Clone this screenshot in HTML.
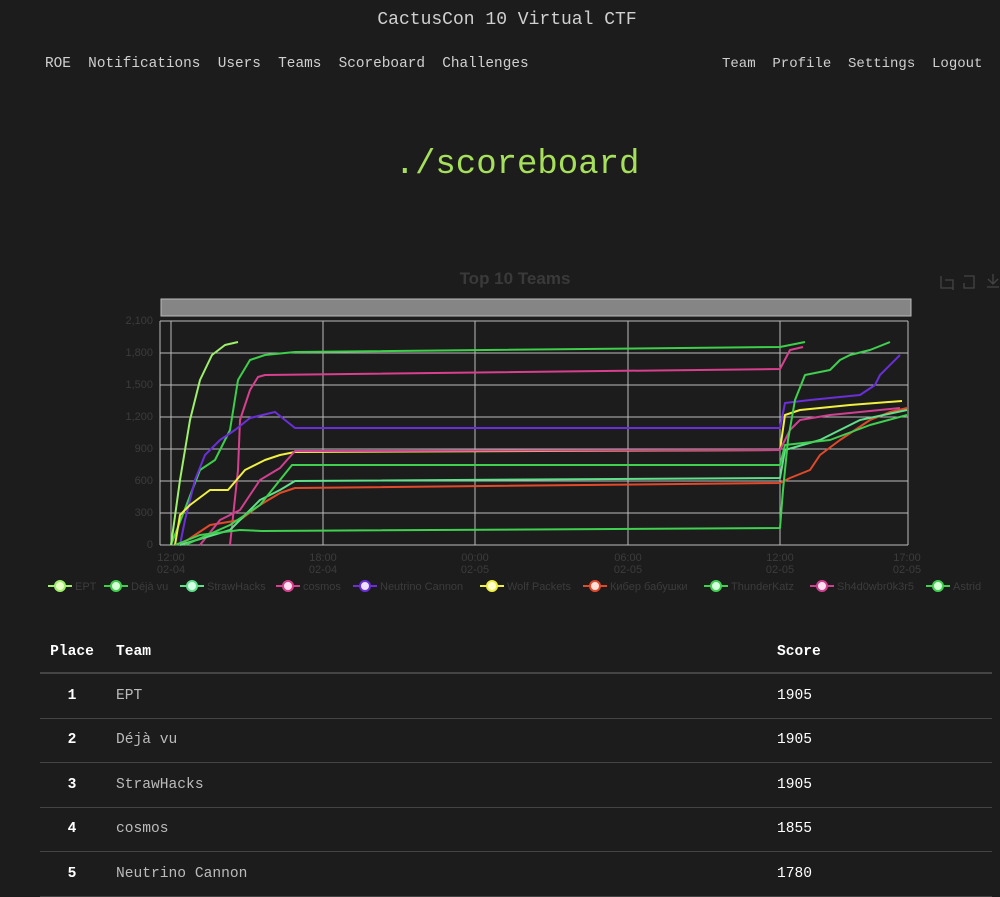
<!DOCTYPE html>
<html><head><meta charset="utf-8"><style>
body{margin:0;background:#1c1c1c;width:1000px;height:895px;overflow:hidden;font-family:"Liberation Mono",monospace;color:#ccc}
.t{position:absolute;white-space:nowrap}
.nav{font-size:14.4px;color:#d0d0d0;top:56px}
table{position:absolute;left:40px;top:632px;width:952px;border-collapse:collapse;font-size:14.6px}
td,th{height:43.5px;padding:0;text-align:left;border-bottom:1px solid #444}
th{color:#fff;font-weight:bold;height:40px;border-bottom:2px solid #444}
td.p{color:#fff;text-align:center;font-weight:bold;width:64px}
td.n{color:#bbb;padding-left:12px}
td.s{color:#fff}
th.p{text-align:center;width:64px}
</style></head><body>
<div class="t" style="top:10px;left:0;width:1014px;text-align:center;font-size:18px;color:#d0d0d0">CactusCon 10 Virtual CTF</div>
<div class="t nav" style="left:45px">ROE&nbsp; Notifications&nbsp; Users&nbsp; Teams&nbsp; Scoreboard&nbsp; Challenges</div>
<div class="t nav" style="left:722px;font-size:14px">Team&nbsp; Profile&nbsp; Settings&nbsp; Logout</div>
<div class="t" style="top:146px;left:0;width:1034px;text-align:center;font-size:34px;color:#a6e05a">./scoreboard</div>
<svg class="t" style="left:0;top:260px" width="1000" height="340" viewBox="0 260 1000 340" font-family="Liberation Sans,sans-serif">
<text x="515" y="284" text-anchor="middle" font-size="17" font-weight="bold" fill="#3a3a3a">Top 10 Teams</text>
<g stroke="#444" fill="none" stroke-width="1.3"><path d="M941 276v12h12M945 280h8v10"/><path d="M964 276h10v12h-10v-5"/><path d="M993 274v10M988 279l5 5 5-5M987 287h12"/></g>
<rect x="161" y="299" width="750" height="17" fill="#858585" stroke="#bbb"/>
<g stroke="#bbb" stroke-width="1"><path d="M160 321H908M160 353H908M160 385H908M160 417H908M160 449H908M160 481H908M160 513H908M160 545H908"/><path d="M171 321V545M323 321V545M475 321V545M628 321V545M780 321V545M908 321V545M160 321V545"/></g>
<g font-size="11" fill="#3c3c3c" text-anchor="end"><text x="153" y="324">2,100</text><text x="153" y="356">1,800</text><text x="153" y="388">1,500</text><text x="153" y="420">1,200</text><text x="153" y="452">900</text><text x="153" y="484">600</text><text x="153" y="516">300</text><text x="153" y="548">0</text></g>
<g font-size="11" fill="#3c3c3c" text-anchor="middle"><text x="171" y="561">12:00</text><text x="171" y="573">02-04</text><text x="323" y="561">18:00</text><text x="323" y="573">02-04</text><text x="475" y="561">00:00</text><text x="475" y="573">02-05</text><text x="628" y="561">06:00</text><text x="628" y="573">02-05</text><text x="780" y="561">12:00</text><text x="780" y="573">02-05</text><text x="907" y="561">17:00</text><text x="907" y="573">02-05</text></g>
<g fill="none" stroke-width="2" stroke-linejoin="round">
<polyline stroke="#3dcf4a" points="171,545 200,470 215,460 230,430 238,380 250,360 265,355 295,352 780,347 790,345 805,342"/>
<polyline stroke="#9cf06a" points="171,545 180,480 190,420 200,380 212,355 225,345 238,342"/>
<polyline stroke="#d8408f" points="230,545 238,470 240,420 250,390 258,377 265,375 780,369 790,350 803,347"/>
<polyline stroke="#6a2fd8" points="180,545 185,520 195,480 205,455 220,440 235,430 250,418 275,412 295,428 780,428 785,403 810,400 860,395 875,385 880,375 900,355"/>
<polyline stroke="#f0f040" points="175,545 180,515 190,505 210,490 228,490 245,470 265,460 280,455 295,452 780,450 785,415 800,410 850,405 902,401"/>
<polyline stroke="#e04a2a" points="180,545 210,525 240,520 260,505 280,493 295,488 780,483 790,478 810,470 820,455 840,440 870,420 890,412 907,408"/>
<polyline stroke="#d04090" points="200,545 220,520 240,510 260,480 280,468 295,451 780,450 790,430 800,420 830,415 880,410 900,408"/>
<polyline stroke="#60e08a" points="180,545 230,530 260,500 280,490 295,481 780,478 785,450 820,440 860,420 907,410"/>
<polyline stroke="#40d050" points="185,545 230,525 260,505 280,480 292,465 780,465 785,445 830,440 870,425 907,415"/>
<polyline stroke="#40d050" points="175,545 200,535 240,530 262,531 780,528 783,490 788,440 795,400 805,375 830,370 840,360 850,355 870,350 890,342"/>
</g>
<g font-size="11" fill="#3c3c3c">
<g stroke-width="2"><path d="M48 586h24" stroke="#9cf06a"/><circle cx="60" cy="586" r="5" fill="#eaffc8" stroke="#9cf06a"/><text x="75" y="590">EPT</text>
<path d="M104 586h24" stroke="#3dcf4a"/><circle cx="116" cy="586" r="5" fill="#d8ffd8" stroke="#3dcf4a"/><text x="131" y="590">Déjà vu</text>
<path d="M180 586h24" stroke="#60e08a"/><circle cx="192" cy="586" r="5" fill="#d8ffe8" stroke="#60e08a"/><text x="207" y="590">StrawHacks</text>
<path d="M276 586h24" stroke="#d8408f"/><circle cx="288" cy="586" r="5" fill="#ffe0f0" stroke="#d8408f"/><text x="303" y="590">cosmos</text>
<path d="M353 586h24" stroke="#6a2fd8"/><circle cx="365" cy="586" r="5" fill="#eee0ff" stroke="#6a2fd8"/><text x="380" y="590">Neutrino Cannon</text>
<path d="M480 586h24" stroke="#f0f040"/><circle cx="492" cy="586" r="5" fill="#ffffd0" stroke="#f0f040"/><text x="507" y="590">Wolf Packets</text>
<path d="M583 586h24" stroke="#e04a2a"/><circle cx="595" cy="586" r="5" fill="#ffe0d8" stroke="#e04a2a"/><text x="610" y="590">Кибер бабушки</text>
<path d="M704 586h24" stroke="#40d050"/><circle cx="716" cy="586" r="5" fill="#d8ffe0" stroke="#40d050"/><text x="731" y="590">ThunderKatz</text>
<path d="M810 586h24" stroke="#d04090"/><circle cx="822" cy="586" r="5" fill="#ffe0f0" stroke="#d04090"/><text x="837" y="590">Sh4d0wbr0k3r5</text>
<path d="M926 586h24" stroke="#40d050"/><circle cx="938" cy="586" r="5" fill="#d8ffd8" stroke="#40d050"/><text x="953" y="590">Astrid</text></g>
</g>
</svg>
<table>
<tr><th class="p">Place</th><th style="padding-left:12px">Team</th><th style="width:215px">Score</th></tr>
<tr><td class="p">1</td><td class="n">EPT</td><td class="s">1905</td></tr>
<tr><td class="p">2</td><td class="n">Déjà vu</td><td class="s">1905</td></tr>
<tr><td class="p">3</td><td class="n">StrawHacks</td><td class="s">1905</td></tr>
<tr><td class="p">4</td><td class="n">cosmos</td><td class="s">1855</td></tr>
<tr><td class="p">5</td><td class="n">Neutrino Cannon</td><td class="s">1780</td></tr>
</table>
</body></html>
